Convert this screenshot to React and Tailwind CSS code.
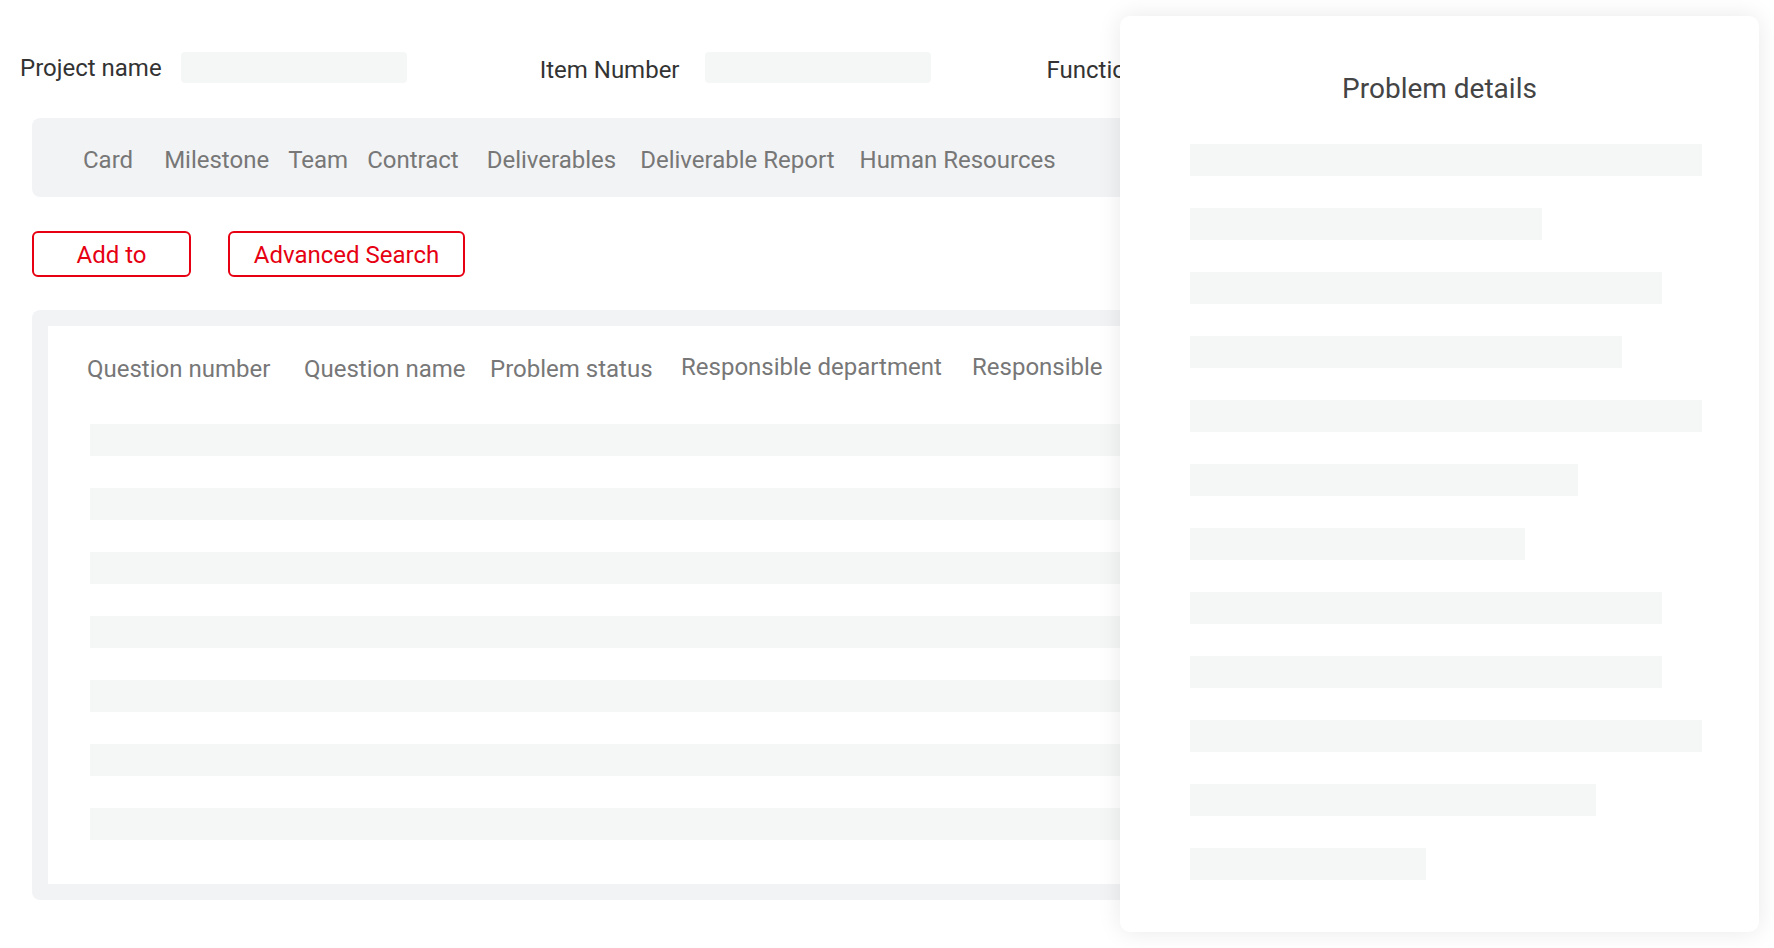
import React from "react";

const tabs = [
  { label: "Card", cls: "ml-[51px]" },
  { label: "Milestone", cls: "ml-[31px]" },
  { label: "Team", cls: "ml-[19px]" },
  { label: "Contract", cls: "ml-[19px]" },
  { label: "Deliverables", cls: "ml-[28px]" },
  { label: "Deliverable Report", cls: "ml-[24px]" },
  { label: "Human Resources", cls: "ml-[25px]" },
];

const columns = [
  { label: "Question number", cls: "w-[217px]" },
  { label: "Question name", cls: "w-[186px]" },
  { label: "Problem status", cls: "w-[191px]" },
  { label: "Responsible department", cls: "w-[291px] -mt-[2px]" },
  { label: "Responsible", cls: "w-[200px] -mt-[2px]" },
];

// widths of the skeleton lines in the side panel
const detailLines = [
  "w-[512px]",
  "w-[352px]",
  "w-[472px]",
  "w-[432px]",
  "w-[512px]",
  "w-[388px]",
  "w-[335px]",
  "w-[472px]",
  "w-[472px]",
  "w-[512px]",
  "w-[406px]",
  "w-[236px]",
];

const App = () => {
  return (
    <div className="relative h-[948px] w-full overflow-hidden bg-white font-[Roboto,'Noto_Sans',sans-serif]">
      {/* ================= FILTERS ================= */}
      <div className="mt-[52px] flex h-[31px] items-center pl-[20px] text-[24px] leading-none text-[#333]">
        <span className="mt-[1px]">Project name</span>
        <div className="ml-[19px] h-[31px] w-[226px] rounded-[4px] bg-[#f5f6f6]" />
        <span className="ml-[133px] mt-[5px]">Item Number</span>
        <div className="ml-[25px] h-[31px] w-[226px] rounded-[4px] bg-[#f5f6f6]" />
        <span className="ml-[116px] mt-[5px] whitespace-nowrap">Functional department</span>
      </div>

      {/* ================= TABS ================= */}
      <div className="ml-[32px] mr-[32px] mt-[35px] flex h-[79px] items-center rounded-[8px] bg-[#f2f3f5] pt-[5px] text-[24px] leading-none text-[#777]">
        {tabs.map((t) => (
          <span key={t.label} className={`${t.cls} whitespace-nowrap`}>
            {t.label}
          </span>
        ))}
      </div>

      {/* ================= ACTIONS ================= */}
      <div className="ml-[32px] mt-[34px] flex gap-[37px] text-[24px] leading-none text-[#e60012]">
        <button className="flex h-[46px] w-[159px] items-center justify-center rounded-[6px] border-2 border-[#e60012] bg-white pt-[2px]">
          Add to
        </button>
        <button className="flex h-[46px] w-[237px] items-center justify-center rounded-[6px] border-2 border-[#e60012] bg-white pt-[2px]">
          Advanced Search
        </button>
      </div>

      {/* ================= TABLE ================= */}
      <div className="ml-[32px] mr-[32px] mt-[33px] rounded-[8px] bg-[#f2f3f5] p-[16px]">
        <div className="h-[558px] bg-white pl-[42px]">
          <div className="flex pt-[31px] -ml-[3px] text-[24px] leading-none text-[#777]">
            {columns.map((c) => (
              <span key={c.label} className={`${c.cls} whitespace-nowrap`}>
                {c.label}
              </span>
            ))}
          </div>
          <div className="mt-[43px] flex flex-col gap-[32px]">
            {Array.from({ length: 7 }).map((_, i) => (
              <div key={i} className="h-[32px] bg-[#f5f6f6]" />
            ))}
          </div>
        </div>
      </div>

      {/* ================= DETAILS DRAWER ================= */}
      <div className="absolute left-[1120px] top-[16px] h-[916px] w-[639px] rounded-[10px] bg-white pt-[59px] shadow-[0_0_24px_rgba(0,0,0,0.09)]">
        <h2 className="text-center text-[28px] leading-[28px] text-[#444]">
          Problem details
        </h2>
        <div className="mt-[41px] flex flex-col gap-[32px] pl-[70px]">
          {detailLines.map((w, i) => (
            <div key={i} className={`h-[32px] bg-[#f5f6f6] ${w}`} />
          ))}
        </div>
      </div>
    </div>
  );
};

export default App;
